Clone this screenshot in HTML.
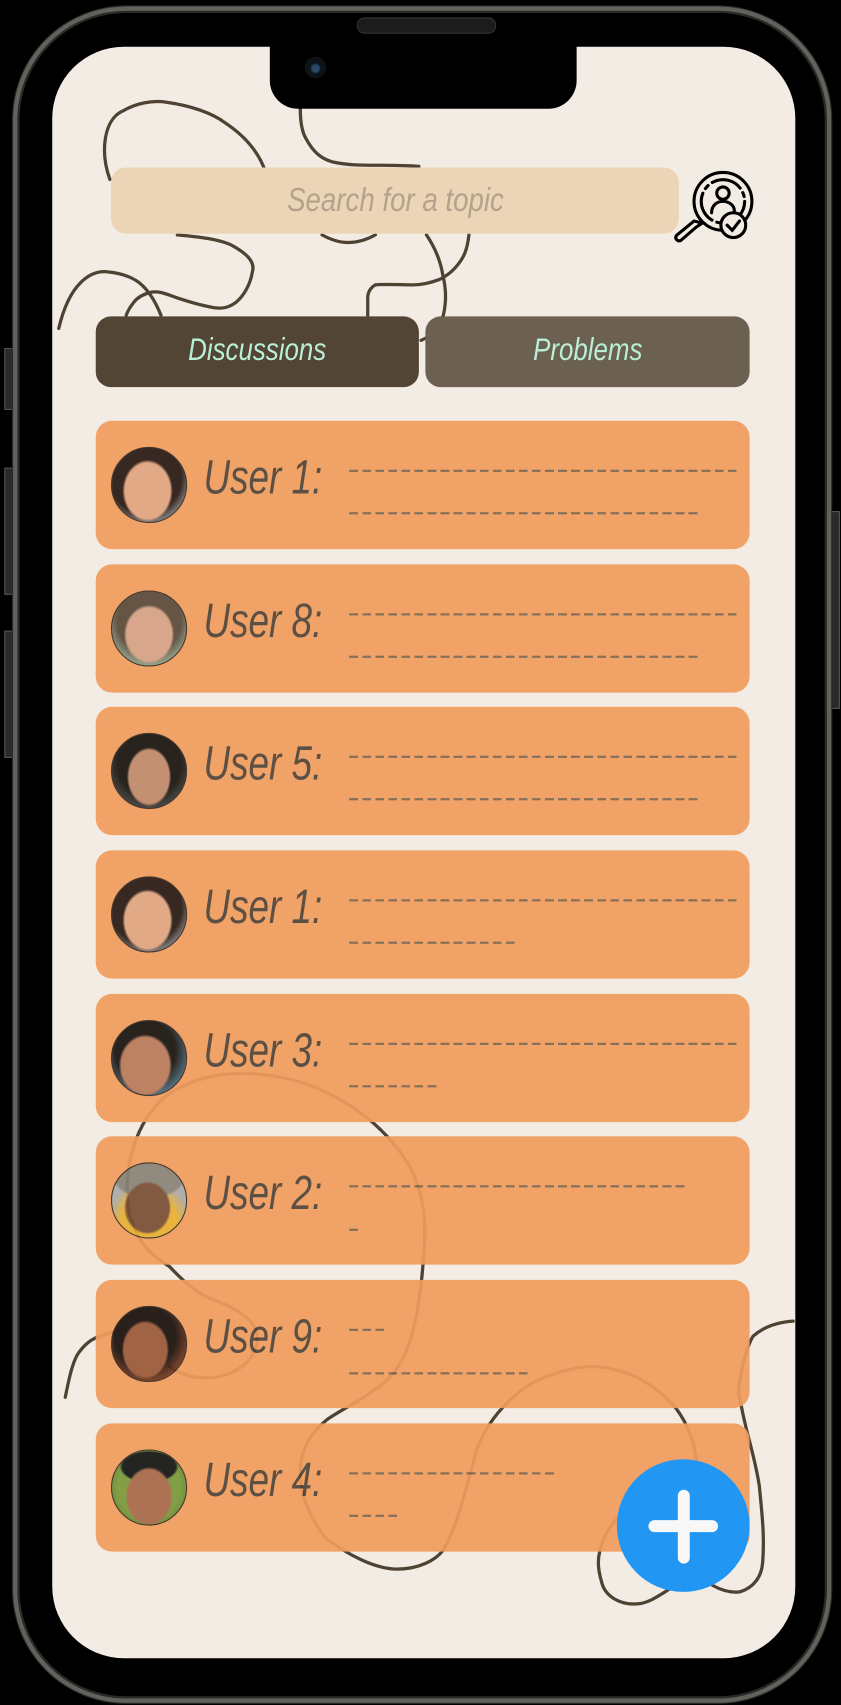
<!DOCTYPE html>
<html><head><meta charset="utf-8">
<style>
html,body{margin:0;padding:0;background:#000;width:841px;height:1705px;overflow:hidden}
#s{position:absolute;left:0;top:0;width:773px;height:1568px;transform:scale(1.08797,1.08737);transform-origin:0 0}
.a{position:absolute}
.frame{left:12px;top:6px;width:744px;height:1552px;border-radius:104px;border:4px solid #62625c;box-shadow:inset 0 0 0 2px #2a2a28, 0 0 0 1px #2a2a28}
.screen{left:48px;top:43px;width:683px;height:1482px;border-radius:66px;background:#f3ece4;overflow:hidden}
.notch{left:248px;top:40px;width:282px;height:60px;background:#000;border-radius:0 0 26px 26px}
.cam{left:280px;top:52px;width:20px;height:20px;border-radius:50%;background:radial-gradient(circle at 50% 55%,#2b4a6a 0 3px,#0b141c 5px,#111 10px)}
.spk{left:328px;top:16px;width:126px;height:13px;border-radius:7px;background:#1c1c1c;border:1px solid #333}
.btn{background:#2a2a28;border:1px solid #555}
.search{left:102px;top:154px;width:522px;height:61px;border-radius:14px;background:#ecd5b7;color:#b3a28c;font:italic 31px "Liberation Sans",sans-serif;text-align:center;line-height:60px}
.search span,.tab span,.u span{display:inline-block;transform:scaleX(.82)}
.tab{top:291px;height:65px;border-radius:14px;color:#b8efd6;font:italic 29px "Liberation Sans",sans-serif;text-align:center;line-height:62px}
.card{left:88px;width:601px;height:118px;border-radius:15px;background:#f09d5e;opacity:.93}
.av{position:absolute;left:14px;top:24px;width:70px;height:70px;border-radius:50%;overflow:hidden;border:1px solid #3a2a20;box-sizing:border-box}
.u{position:absolute;left:99px;top:28px;font:italic 44px "Liberation Sans",sans-serif;color:#51453a;white-space:nowrap}
.u span{transform-origin:0 50%;transform:scaleX(.77)}
.d{position:absolute;left:233px;height:2px;background:repeating-linear-gradient(90deg,#7c6650 0 8px,transparent 8px 12px)}
.fab{left:567px;top:1342px;width:122px;height:122px;border-radius:50%;background:#2196f3}
</style></head><body>
<div id="s">
<div class="a btn" style="left:4px;top:320px;width:8px;height:55px"></div>
<div class="a btn" style="left:4px;top:430px;width:8px;height:115px"></div>
<div class="a btn" style="left:4px;top:580px;width:8px;height:115px"></div>
<div class="a btn" style="left:762px;top:470px;width:8px;height:180px"></div>
<div class="a frame"></div>
<div class="a spk"></div>
<div class="a screen"></div>
<svg class="a" style="left:0;top:0" width="773" height="1568" viewBox="0 0 773 1568" fill="none" stroke="#4e4232" stroke-width="3" stroke-linecap="round">
<path d="M101,165 C92,140 95,110 113,102 C125,95 140,92 153,94 C175,97 195,104 207,113 C225,125 238,140 244,158"/>
<path d="M163,216 C185,218 200,220 212,225 C225,232 235,240 232,250 C230,262 224,272 217,278 C210,283 205,284 197,283 C185,281 175,278 163,274 C152,270 145,267 138,269 C130,271 126,274 123,278 C119,283 117,287 116,290"/>
<path d="M54,302 C58,285 64,270 74,260 C82,252 90,249 99,250 C110,251 120,254 128,260 C138,268 144,280 148,290"/>
<path d="M276,100 C276,110 277,120 281,127 C288,140 295,146 306,149 C320,152 333,152 345,152 C360,152 372,152 385,153"/>
<path d="M296,216 C305,221 312,223 320,223 C330,223 338,220 345,216"/>
<path d="M392,216 C400,228 405,240 407,253 C410,265 410,273 409,281 C408,290 406,297 402,302 C397,308 392,311 387,313"/>
<path d="M431,216 C430,226 428,233 424,239 C418,248 412,253 404,257 C396,260 388,262 380,262 C368,262 355,261 345,262 C340,265 338,269 338,274 C338,280 338,285 338,290"/>
<path d="M60,1285 C63,1270 66,1255 71,1246 C77,1237 84,1231 92,1229 C97,1227 100,1226 104,1225"/>
<path d="M156,1165 C140,1155 128,1145 120,1120 C112,1090 118,1040 150,1010 C175,990 210,985 239,988 C300,993 350,1030 375,1070 C392,1100 392,1130 389,1160 C386,1200 380,1240 361,1264 C340,1285 315,1295 300,1306 C285,1318 276,1335 276,1352 C276,1380 288,1400 300,1415 C320,1430 345,1443 365,1443 C385,1443 400,1435 407,1426 C420,1405 428,1370 438,1334 C450,1300 480,1272 508,1264 C525,1258 540,1256 551,1257 C580,1260 605,1275 622,1296 C632,1310 638,1325 640,1342"/>
<path d="M156,1165 C170,1180 182,1190 193,1194 C215,1202 232,1212 236,1225 C240,1245 222,1265 193,1267 C175,1268 163,1262 156,1257"/>
<path d="M616,1461 C605,1468 595,1475 585,1475 C570,1476 556,1468 553,1455 C550,1445 549,1436 551,1428 C554,1414 560,1404 567,1397"/>
<path d="M655,1458 C664,1463 672,1465 680,1464 C693,1460 700,1450 701,1437 C703,1410 700,1390 698,1367 C694,1340 686,1318 682,1296 C679,1285 678,1278 680,1271 C683,1250 688,1236 692,1229 C702,1220 715,1216 729,1215"/>
</svg>
<div class="a notch"></div>
<div class="a cam"></div>
<div class="a search"><span>Search for a topic</span></div>
<svg class="a" style="left:617px;top:152px" width="76" height="74" viewBox="0 0 80 74" fill="none" stroke="#000" stroke-width="3" stroke-linecap="round">
<circle cx="50" cy="33" r="28"/>
<circle cx="50" cy="33" r="21" stroke-dasharray="30 5 4 5"/>
<circle cx="50" cy="25" r="6"/>
<path d="M39,44 C39,37 44,33 50,33 C56,33 61,37 61,42"/>
<path d="M30,54 L22,52 L5,66 C3,69 6,72 9,71 L24,58 Z"/>
<circle cx="60" cy="56" r="12" fill="#f3ece4"/>
<path d="M54,56 L59,61 L66,52"/>
</svg>
<div class="a tab" style="left:88px;width:297px;background:#524535"><span>Discussions</span></div>
<div class="a tab" style="left:391px;width:298px;background:#6c6051"><span>Problems</span></div>

<div class="a card" style="top:387px"><div class="av" style="background:radial-gradient(ellipse 34% 42% at 48% 58%,#e0a47e 0 90%,transparent 100%),radial-gradient(circle at 45% 40%,#2a1a14 0 60%,#777 75%)"></div><div class="u"><span>User 1:</span></div><div class="d" style="top:45px;width:358px"></div><div class="d" style="top:84px;width:322px"></div></div>
<div class="a card" style="top:519px"><div class="av" style="background:radial-gradient(ellipse 34% 40% at 50% 58%,#d5a185 0 90%,transparent 100%),radial-gradient(circle at 50% 40%,#5a4a3a 0 55%,#8a9a80 75%)"></div><div class="u"><span>User 8:</span></div><div class="d" style="top:45px;width:358px"></div><div class="d" style="top:84px;width:322px"></div></div>
<div class="a card" style="top:650px"><div class="av" style="background:radial-gradient(ellipse 30% 40% at 50% 58%,#c08a6a 0 90%,transparent 100%),radial-gradient(circle at 50% 40%,#1a1410 0 55%,#3a3a36 75%)"></div><div class="u"><span>User 5:</span></div><div class="d" style="top:45px;width:358px"></div><div class="d" style="top:84px;width:322px"></div></div>
<div class="a card" style="top:782px"><div class="av" style="background:radial-gradient(ellipse 34% 42% at 48% 58%,#e0a47e 0 90%,transparent 100%),radial-gradient(circle at 45% 40%,#2a1a14 0 60%,#777 75%)"></div><div class="u"><span>User 1:</span></div><div class="d" style="top:45px;width:358px"></div><div class="d" style="top:84px;width:153px"></div></div>
<div class="a card" style="top:914px"><div class="av" style="background:radial-gradient(ellipse 36% 42% at 45% 60%,#b97a5a 0 90%,transparent 100%),radial-gradient(circle at 45% 40%,#1a1410 0 50%,#4a6a7a 75%)"></div><div class="u"><span>User 3:</span></div><div class="d" style="top:45px;width:358px"></div><div class="d" style="top:84px;width:81px"></div></div>
<div class="a card" style="top:1045px"><div class="av" style="background:radial-gradient(ellipse 32% 36% at 48% 60%,#7a4f35 0 90%,transparent 100%),radial-gradient(ellipse 50% 30% at 50% 18%,#8a8478 0 90%,transparent 100%),radial-gradient(circle at 50% 80%,#e8b030 0 40%,#aaa 60%)"></div><div class="u"><span>User 2:</span></div><div class="d" style="top:45px;width:310px"></div><div class="d" style="top:85px;width:8px"></div></div>
<div class="a card" style="top:1177px"><div class="av" style="background:radial-gradient(ellipse 32% 40% at 45% 58%,#9a5a3a 0 90%,transparent 100%),radial-gradient(circle at 45% 40%,#1a100c 0 50%,#7a3a20 75%)"></div><div class="u"><span>User 9:</span></div><div class="d" style="top:45px;width:32px"></div><div class="d" style="top:85px;width:166px"></div></div>
<div class="a card" style="top:1309px"><div class="av" style="background:radial-gradient(ellipse 32% 40% at 50% 62%,#a8684a 0 90%,transparent 100%),radial-gradient(ellipse 40% 22% at 50% 22%,#151515 0 90%,transparent 100%),radial-gradient(circle,#7a9a3a 0 60%,#4a6a20 100%)"></div><div class="u"><span>User 4:</span></div><div class="d" style="top:45px;width:190px"></div><div class="d" style="top:84px;width:45px"></div></div>

<div class="a fab"></div>
<div class="a" style="left:596px;top:1398px;width:64px;height:11px;border-radius:6px;background:#f8f8f8"></div>
<div class="a" style="left:623px;top:1370px;width:11px;height:68px;border-radius:6px;background:#f8f8f8"></div>
</div>
</body></html>
